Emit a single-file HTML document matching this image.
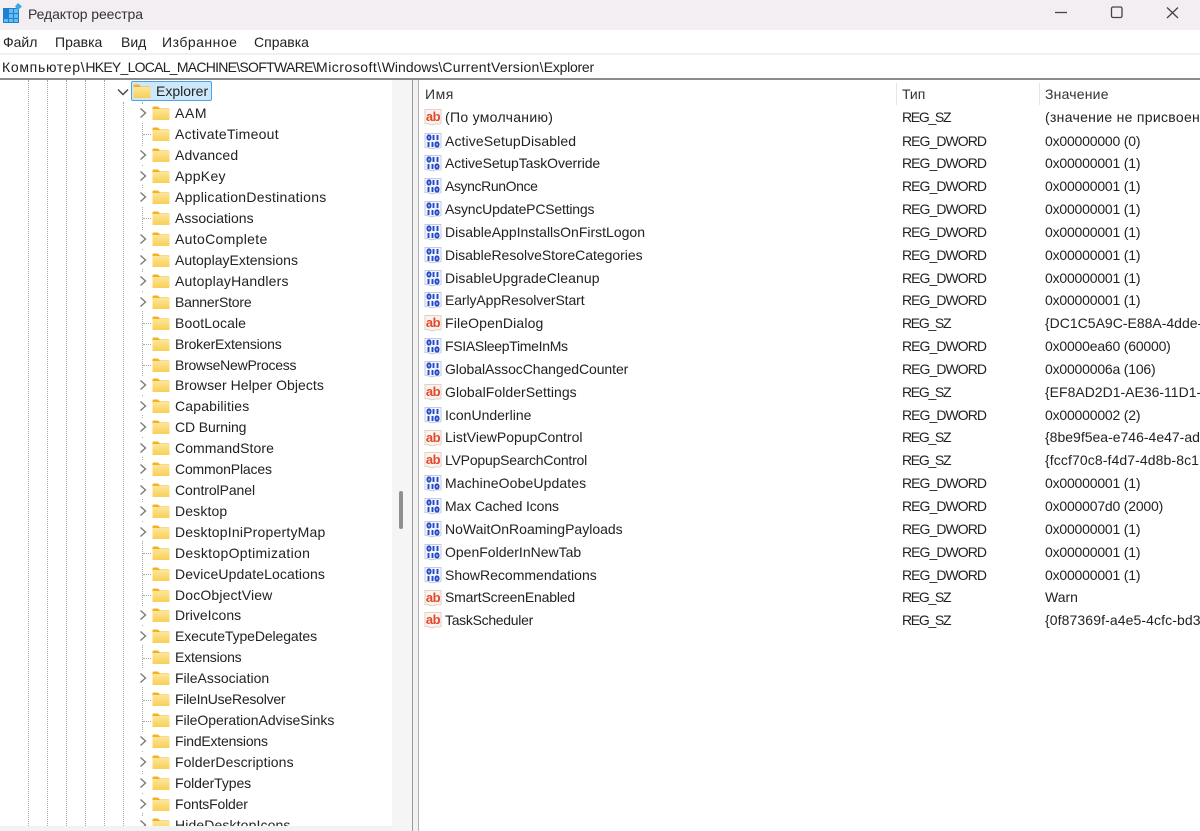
<!DOCTYPE html>
<html lang="ru"><head><meta charset="utf-8"><title>Редактор реестра</title>
<style>
html,body{margin:0;padding:0;width:1200px;height:831px;overflow:hidden;background:#fff;font-family:"Liberation Sans","Noto Sans CJK JP",sans-serif;color:#222;font-size:14px}
.a{position:absolute;white-space:nowrap}
.t{left:175px;height:21px;line-height:21px}
.fi{left:151.500px;width:18px;height:16px}
.ch{left:139px;width:8px;height:12px;background:#fff;box-shadow:0 0 0 3px #fff}
.r{height:23px;line-height:23px}
.n{left:445px}.y{left:902px;letter-spacing:-.95px}.s{letter-spacing:-1.300px}.v{left:1045px;width:155px;overflow:hidden;letter-spacing:-.2px}
.ic{left:424px;width:18px;height:18px}
.h{top:83px;height:22px;line-height:22px;color:#333}
.hs{top:83px;width:1px;height:22px;background:#e5e5e5}
.dv{width:0;border-left:1px dotted #a8a8a8}
.dh{height:0;width:8px;border-top:1px dotted #a8a8a8;left:143px}
.m{top:32px;height:21px;line-height:21px}
.w{position:absolute;left:0;top:0;overflow:hidden}
svg.a{overflow:visible}
</style></head><body>
<svg width="0" height="0" style="position:absolute"><defs>
<linearGradient id="g" x1="0" y1="0" x2="0" y2="1"><stop offset="0" stop-color="#fde69a"/><stop offset="1" stop-color="#f9cf55"/></linearGradient>
<symbol id="f" viewBox="0 0 18 16"><path d="M0.500 2.500a1 1 0 0 1 1-1h4.500l2 2h8.500a1 1 0 0 1 1 1v9.500a1 1 0 0 1-1 1h-15a1 1 0 0 1-1-1z" fill="#f3b320"/><rect x="0.500" y="4" width="17" height="11" rx="1" fill="url(#g)"/></symbol>
<symbol id="c" viewBox="0 0 8 12"><path d="M1.500 1.500L6.500 6L1.500 10.500" fill="none" stroke="#7c7c7c" stroke-width="1.400"/></symbol>
<symbol id="ab" viewBox="0 0 18 18"><path d="M1 1.500h16v14c-2 1.500-4-.5-6 .5s-4 1-6 0-3 0-4-.5z" fill="#fbf3ef" stroke="#e3cfc6"/><text x="9" y="13" font-family="Liberation Sans" font-weight="700" font-size="13" letter-spacing="-.4" text-anchor="middle" fill="#e0492a">ab</text></symbol>
<symbol id="b" viewBox="0 0 18 18"><path d="M1 1.500h16v14c-2 1.500-4-.5-6 .5s-4 1-6 0-3 0-4-.5z" fill="#f3f5fc" stroke="#c4cae2"/><g fill="none" stroke="#2348c8" stroke-width="1.900"><ellipse cx="5" cy="5.500" rx="1.600" ry="2.200"/><path d="M9.500 3v5M13.500 3v5"/><path d="M4.500 10v5M8.500 10v5"/><ellipse cx="13" cy="12.500" rx="1.600" ry="2.200"/></g></symbol>
</defs></svg>

<div class="a" style="left:0;top:0;width:1200px;height:30px;background:#f3eef2"></div>
<svg class="a" style="left:2px;top:3px" width="20" height="20" viewBox="0 0 20 20"><rect x="1" y="5" width="16" height="15" fill="#1f7fd0"/><g fill="#63bdf0"><rect x="7" y="6" width="4" height="4"/><rect x="12" y="6" width="4" height="4"/><rect x="7" y="11" width="4" height="4"/><rect x="12" y="11" width="4" height="4"/><rect x="2" y="16" width="4" height="3"/><rect x="7" y="16" width="4" height="3"/><rect x="12" y="16" width="4" height="3"/></g><path d="M16 0l4 3.500-4 3.500-3-3.500z" fill="#3fa4e4"/></svg>
<div class="a" style="left:28px;top:4px;height:20px;line-height:20px;color:#333;letter-spacing:-.1px">Редактор реестра</div>
<svg class="a" style="left:1050px;top:0" width="150" height="26" fill="none" stroke="#444" stroke-width="1.300"><path d="M5 12.500H17"/><rect x="61.500" y="7" width="10.500" height="10.500" rx="1.500"/><path d="M117 7.500L128 18M128 7.500L117 18"/></svg>

<div class="a m" style="left:3px">Файл</div>
<div class="a m" style="left:55px">Правка</div>
<div class="a m" style="left:121px">Вид</div>
<div class="a m" style="left:162px;letter-spacing:.5px">Избранное</div>
<div class="a m" style="left:254px">Справка</div>
<div class="a" style="left:0;top:53px;width:1200px;height:2px;background:#f1f1f1"></div>
<div class="a" style="left:2px;top:56px;height:22px;line-height:22px"><span style="letter-spacing:.7px">Компьютер\</span><span style="letter-spacing:-.74px">HKEY_LOCAL_MACHINE\</span><span style="letter-spacing:-.67px">SOFTWARE\</span><span style="letter-spacing:.5px">Microsoft\</span><span>Windows\</span><span style="letter-spacing:.27px">CurrentVersion\</span><span style="letter-spacing:-.25px">Explorer</span></div>
<div class="a" style="left:0;top:78px;width:1200px;height:2px;background:#8c8c8c"></div>

<div class="w" style="width:392px;height:826px">
<div class="a dv" style="left:28px;top:80px;height:746px"></div>
<div class="a dv" style="left:47px;top:80px;height:746px"></div>
<div class="a dv" style="left:66px;top:80px;height:746px"></div>
<div class="a dv" style="left:85px;top:80px;height:746px"></div>
<div class="a dv" style="left:104px;top:80px;height:746px"></div>
<div class="a dv" style="left:123px;top:102px;height:724px"></div>
<div class="a dv" style="left:142px;top:102px;height:724px"></div>

<div class="a" style="left:131px;top:81px;width:81px;height:20px;background:#cde8fb;border:1px solid #4da3e3;border-radius:2px;box-sizing:border-box"></div>
<svg class="a" style="left:117px;top:88px" width="12" height="8" viewBox="0 0 12 8"><path d="M1 1.500L6 6.500L11 1.500" fill="none" stroke="#444" stroke-width="1.400"/></svg>
<svg class="a" style="left:133px;top:83px" width="18" height="16"><use href="#f"/></svg>
<div class="a" style="left:156px;top:81px;height:21px;line-height:21px">Explorer</div>

<svg class="a ch" style="top:107px"><use href="#c"/></svg><svg class="a fi" style="top:105px"><use href="#f"/></svg><div class="a t" style="top:103px;letter-spacing:.6px">AAM</div>
<div class="a dh" style="top:134px"></div><svg class="a fi" style="top:126px"><use href="#f"/></svg><div class="a t" style="top:124px;letter-spacing:.27px">ActivateTimeout</div>
<svg class="a ch" style="top:149px"><use href="#c"/></svg><svg class="a fi" style="top:147px"><use href="#f"/></svg><div class="a t" style="top:145px;letter-spacing:.12px">Advanced</div>
<svg class="a ch" style="top:170px"><use href="#c"/></svg><svg class="a fi" style="top:168px"><use href="#f"/></svg><div class="a t" style="top:166px;letter-spacing:.3px">AppKey</div>
<svg class="a ch" style="top:191px"><use href="#c"/></svg><svg class="a fi" style="top:189px"><use href="#f"/></svg><div class="a t" style="top:187px;letter-spacing:.26px">ApplicationDestinations</div>
<div class="a dh" style="top:218px"></div><svg class="a fi" style="top:210px"><use href="#f"/></svg><div class="a t" style="top:208px">Associations</div>
<svg class="a ch" style="top:233px"><use href="#c"/></svg><svg class="a fi" style="top:231px"><use href="#f"/></svg><div class="a t" style="top:229px;letter-spacing:.32px">AutoComplete</div>
<svg class="a ch" style="top:254px"><use href="#c"/></svg><svg class="a fi" style="top:252px"><use href="#f"/></svg><div class="a t" style="top:250px">AutoplayExtensions</div>
<svg class="a ch" style="top:275px"><use href="#c"/></svg><svg class="a fi" style="top:273px"><use href="#f"/></svg><div class="a t" style="top:271px;letter-spacing:.2px">AutoplayHandlers</div>
<svg class="a ch" style="top:296px"><use href="#c"/></svg><svg class="a fi" style="top:294px"><use href="#f"/></svg><div class="a t" style="top:292px;letter-spacing:-.2px">BannerStore</div>
<div class="a dh" style="top:323px"></div><svg class="a fi" style="top:315px"><use href="#f"/></svg><div class="a t" style="top:313px;letter-spacing:.1px">BootLocale</div>
<div class="a dh" style="top:344px"></div><svg class="a fi" style="top:336px"><use href="#f"/></svg><div class="a t" style="top:334px;letter-spacing:-.2px">BrokerExtensions</div>
<div class="a dh" style="top:365px"></div><svg class="a fi" style="top:357px"><use href="#f"/></svg><div class="a t" style="top:355px;letter-spacing:-.25px">BrowseNewProcess</div>
<svg class="a ch" style="top:379px"><use href="#c"/></svg><svg class="a fi" style="top:377px"><use href="#f"/></svg><div class="a t" style="top:375px;letter-spacing:.05px">Browser Helper Objects</div>
<svg class="a ch" style="top:400px"><use href="#c"/></svg><svg class="a fi" style="top:398px"><use href="#f"/></svg><div class="a t" style="top:396px;letter-spacing:.17px">Capabilities</div>
<svg class="a ch" style="top:421px"><use href="#c"/></svg><svg class="a fi" style="top:419px"><use href="#f"/></svg><div class="a t" style="top:417px;letter-spacing:-.1px">CD Burning</div>
<svg class="a ch" style="top:442px"><use href="#c"/></svg><svg class="a fi" style="top:440px"><use href="#f"/></svg><div class="a t" style="top:438px;letter-spacing:.08px">CommandStore</div>
<svg class="a ch" style="top:463px"><use href="#c"/></svg><svg class="a fi" style="top:461px"><use href="#f"/></svg><div class="a t" style="top:459px;letter-spacing:-.17px">CommonPlaces</div>
<svg class="a ch" style="top:484px"><use href="#c"/></svg><svg class="a fi" style="top:482px"><use href="#f"/></svg><div class="a t" style="top:480px;letter-spacing:-.08px">ControlPanel</div>
<svg class="a ch" style="top:505px"><use href="#c"/></svg><svg class="a fi" style="top:503px"><use href="#f"/></svg><div class="a t" style="top:501px;letter-spacing:.14px">Desktop</div>
<svg class="a ch" style="top:526px"><use href="#c"/></svg><svg class="a fi" style="top:524px"><use href="#f"/></svg><div class="a t" style="top:522px;letter-spacing:.2px">DesktopIniPropertyMap</div>
<div class="a dh" style="top:553px"></div><svg class="a fi" style="top:545px"><use href="#f"/></svg><div class="a t" style="top:543px;letter-spacing:.32px">DesktopOptimization</div>
<div class="a dh" style="top:574px"></div><svg class="a fi" style="top:566px"><use href="#f"/></svg><div class="a t" style="top:564px;letter-spacing:.1px">DeviceUpdateLocations</div>
<div class="a dh" style="top:595px"></div><svg class="a fi" style="top:587px"><use href="#f"/></svg><div class="a t" style="top:585px;letter-spacing:.15px">DocObjectView</div>
<svg class="a ch" style="top:609px"><use href="#c"/></svg><svg class="a fi" style="top:607px"><use href="#f"/></svg><div class="a t" style="top:605px">DriveIcons</div>
<svg class="a ch" style="top:630px"><use href="#c"/></svg><svg class="a fi" style="top:628px"><use href="#f"/></svg><div class="a t" style="top:626px;letter-spacing:-.1px">ExecuteTypeDelegates</div>
<div class="a dh" style="top:658px"></div><svg class="a fi" style="top:649px"><use href="#f"/></svg><div class="a t" style="top:647px;letter-spacing:-.2px">Extensions</div>
<svg class="a ch" style="top:672px"><use href="#c"/></svg><svg class="a fi" style="top:670px"><use href="#f"/></svg><div class="a t" style="top:668px">FileAssociation</div>
<div class="a dh" style="top:700px"></div><svg class="a fi" style="top:691px"><use href="#f"/></svg><div class="a t" style="top:689px;letter-spacing:-.24px">FileInUseResolver</div>
<div class="a dh" style="top:721px"></div><svg class="a fi" style="top:712px"><use href="#f"/></svg><div class="a t" style="top:710px;letter-spacing:-.04px">FileOperationAdviseSinks</div>
<svg class="a ch" style="top:735px"><use href="#c"/></svg><svg class="a fi" style="top:733px"><use href="#f"/></svg><div class="a t" style="top:731px;letter-spacing:-.21px">FindExtensions</div>
<svg class="a ch" style="top:756px"><use href="#c"/></svg><svg class="a fi" style="top:754px"><use href="#f"/></svg><div class="a t" style="top:752px;letter-spacing:.11px">FolderDescriptions</div>
<svg class="a ch" style="top:777px"><use href="#c"/></svg><svg class="a fi" style="top:775px"><use href="#f"/></svg><div class="a t" style="top:773px;letter-spacing:-.09px">FolderTypes</div>
<svg class="a ch" style="top:798px"><use href="#c"/></svg><svg class="a fi" style="top:796px"><use href="#f"/></svg><div class="a t" style="top:794px;letter-spacing:-.18px">FontsFolder</div>
<svg class="a ch" style="top:819px"><use href="#c"/></svg><svg class="a fi" style="top:817px"><use href="#f"/></svg><div class="a t" style="top:815px;letter-spacing:.12px">HideDesktopIcons</div>
</div>

<div class="a" style="left:392px;top:80px;width:20px;height:751px;background:#f5f5f5"></div>
<div class="a" style="left:399px;top:491px;width:4px;height:38px;background:#8f8f8f;border-radius:2px"></div>
<div class="a" style="left:412px;top:80px;width:1px;height:751px;background:#9a9a9a"></div>
<div class="a" style="left:413px;top:80px;width:5px;height:751px;background:#f2f2f2"></div>
<div class="a" style="left:418px;top:80px;width:1px;height:751px;background:#b0b0b0"></div>
<div class="a" style="left:0;top:826px;width:392px;height:5px;background:#f2f2f2"></div>

<div class="a h" style="left:425px;letter-spacing:.5px">Имя</div><div class="a hs" style="left:896px"></div>
<div class="a h" style="left:902px">Тип</div><div class="a hs" style="left:1039px"></div>
<div class="a h" style="left:1045px;letter-spacing:.2px">Значение</div>

<svg class="a ic" style="top:108px"><use href="#ab"/></svg><div class="a r n" style="top:106px;letter-spacing:.3px">(По умолчанию)</div><div class="a r y s" style="top:106px">REG_SZ</div><div class="a r v" style="top:106px;letter-spacing:.3px">(значение не присвоено)</div>
<svg class="a ic" style="top:132px"><use href="#b"/></svg><div class="a r n" style="top:130px;letter-spacing:.1px">ActiveSetupDisabled</div><div class="a r y" style="top:130px">REG_DWORD</div><div class="a r v" style="top:130px">0x00000000 (0)</div>
<svg class="a ic" style="top:154px"><use href="#b"/></svg><div class="a r n" style="top:152px;letter-spacing:-.09px">ActiveSetupTaskOverride</div><div class="a r y" style="top:152px">REG_DWORD</div><div class="a r v" style="top:152px">0x00000001 (1)</div>
<svg class="a ic" style="top:177px"><use href="#b"/></svg><div class="a r n" style="top:175px;letter-spacing:-.4px">AsyncRunOnce</div><div class="a r y" style="top:175px">REG_DWORD</div><div class="a r v" style="top:175px">0x00000001 (1)</div>
<svg class="a ic" style="top:200px"><use href="#b"/></svg><div class="a r n" style="top:198px;letter-spacing:-.19px">AsyncUpdatePCSettings</div><div class="a r y" style="top:198px">REG_DWORD</div><div class="a r v" style="top:198px">0x00000001 (1)</div>
<svg class="a ic" style="top:223px"><use href="#b"/></svg><div class="a r n" style="top:221px">DisableAppInstallsOnFirstLogon</div><div class="a r y" style="top:221px">REG_DWORD</div><div class="a r v" style="top:221px">0x00000001 (1)</div>
<svg class="a ic" style="top:246px"><use href="#b"/></svg><div class="a r n" style="top:244px;letter-spacing:-.03px">DisableResolveStoreCategories</div><div class="a r y" style="top:244px">REG_DWORD</div><div class="a r v" style="top:244px">0x00000001 (1)</div>
<svg class="a ic" style="top:269px"><use href="#b"/></svg><div class="a r n" style="top:267px;letter-spacing:.1px">DisableUpgradeCleanup</div><div class="a r y" style="top:267px">REG_DWORD</div><div class="a r v" style="top:267px">0x00000001 (1)</div>
<svg class="a ic" style="top:291px"><use href="#b"/></svg><div class="a r n" style="top:289px;letter-spacing:-.1px">EarlyAppResolverStart</div><div class="a r y" style="top:289px">REG_DWORD</div><div class="a r v" style="top:289px">0x00000001 (1)</div>
<svg class="a ic" style="top:314px"><use href="#ab"/></svg><div class="a r n" style="top:312px;letter-spacing:.14px">FileOpenDialog</div><div class="a r y s" style="top:312px">REG_SZ</div><div class="a r v" style="top:312px;letter-spacing:0">{DC1C5A9C-E88A-4dde-A5A1-60F82A20AEF7}</div>
<svg class="a ic" style="top:337px"><use href="#b"/></svg><div class="a r n" style="top:335px;letter-spacing:-.3px">FSIASleepTimeInMs</div><div class="a r y" style="top:335px">REG_DWORD</div><div class="a r v" style="top:335px">0x0000ea60 (60000)</div>
<svg class="a ic" style="top:360px"><use href="#b"/></svg><div class="a r n" style="top:358px;letter-spacing:-.08px">GlobalAssocChangedCounter</div><div class="a r y" style="top:358px">REG_DWORD</div><div class="a r v" style="top:358px">0x0000006a (106)</div>
<svg class="a ic" style="top:383px"><use href="#ab"/></svg><div class="a r n" style="top:381px;letter-spacing:.05px">GlobalFolderSettings</div><div class="a r y s" style="top:381px">REG_SZ</div><div class="a r v" style="top:381px;letter-spacing:0">{EF8AD2D1-AE36-11D1-B2D2-006097DF8C11}</div>
<svg class="a ic" style="top:406px"><use href="#b"/></svg><div class="a r n" style="top:404px">IconUnderline</div><div class="a r y" style="top:404px">REG_DWORD</div><div class="a r v" style="top:404px">0x00000002 (2)</div>
<svg class="a ic" style="top:429px"><use href="#ab"/></svg><div class="a r n" style="top:426px">ListViewPopupControl</div><div class="a r y s" style="top:426px">REG_SZ</div><div class="a r v" style="top:426px;letter-spacing:0">{8be9f5ea-e746-4e47-ad57-3fb191ca1eed}</div>
<svg class="a ic" style="top:451px"><use href="#ab"/></svg><div class="a r n" style="top:449px;letter-spacing:-.2px">LVPopupSearchControl</div><div class="a r y s" style="top:449px">REG_SZ</div><div class="a r v" style="top:449px;letter-spacing:.1px">{fccf70c8-f4d7-4d8b-8c17-cd6715e37fff}</div>
<svg class="a ic" style="top:474px"><use href="#b"/></svg><div class="a r n" style="top:472px;letter-spacing:.11px">MachineOobeUpdates</div><div class="a r y" style="top:472px">REG_DWORD</div><div class="a r v" style="top:472px">0x00000001 (1)</div>
<svg class="a ic" style="top:497px"><use href="#b"/></svg><div class="a r n" style="top:495px;letter-spacing:-.13px">Max Cached Icons</div><div class="a r y" style="top:495px">REG_DWORD</div><div class="a r v" style="top:495px">0x000007d0 (2000)</div>
<svg class="a ic" style="top:520px"><use href="#b"/></svg><div class="a r n" style="top:518px">NoWaitOnRoamingPayloads</div><div class="a r y" style="top:518px">REG_DWORD</div><div class="a r v" style="top:518px">0x00000001 (1)</div>
<svg class="a ic" style="top:543px"><use href="#b"/></svg><div class="a r n" style="top:541px">OpenFolderInNewTab</div><div class="a r y" style="top:541px">REG_DWORD</div><div class="a r v" style="top:541px">0x00000001 (1)</div>
<svg class="a ic" style="top:566px"><use href="#b"/></svg><div class="a r n" style="top:564px">ShowRecommendations</div><div class="a r y" style="top:564px">REG_DWORD</div><div class="a r v" style="top:564px">0x00000001 (1)</div>
<svg class="a ic" style="top:589px"><use href="#ab"/></svg><div class="a r n" style="top:586px;letter-spacing:-.17px">SmartScreenEnabled</div><div class="a r y s" style="top:586px">REG_SZ</div><div class="a r v" style="top:586px;letter-spacing:0">Warn</div>
<svg class="a ic" style="top:611px"><use href="#ab"/></svg><div class="a r n" style="top:609px;letter-spacing:-.3px">TaskScheduler</div><div class="a r y s" style="top:609px">REG_SZ</div><div class="a r v" style="top:609px;letter-spacing:.1px">{0f87369f-a4e5-4cfc-bd3e-73e6154572dd}</div>
</body></html>
